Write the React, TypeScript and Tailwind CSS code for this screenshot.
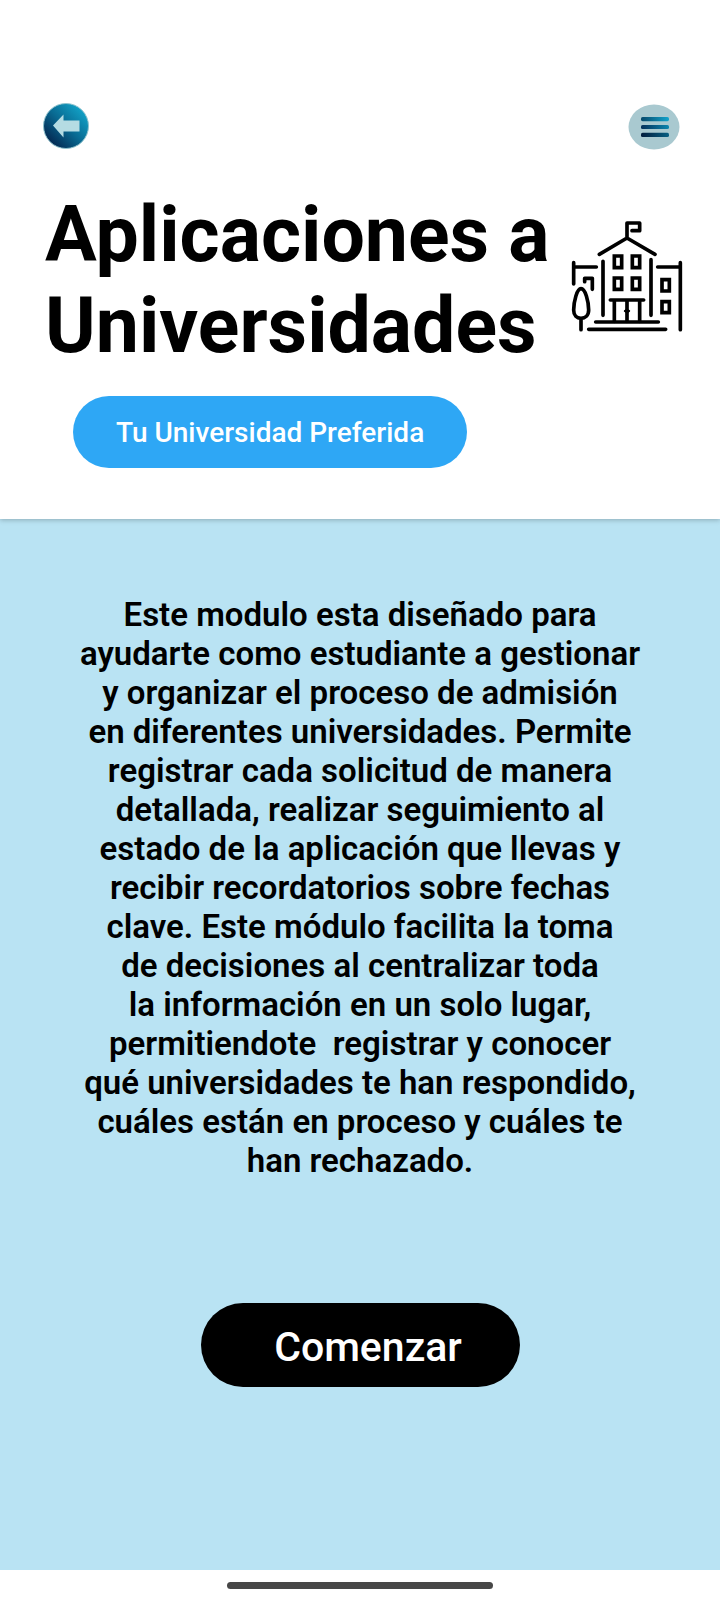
const description =
  "Este modulo esta diseñado para\nayudarte como estudiante a gestionar\ny organizar el proceso de admisión\nen diferentes universidades. Permite\nregistrar cada solicitud de manera\ndetallada, realizar seguimiento al\nestado de la aplicación que llevas y\nrecibir recordatorios sobre fechas\nclave. Este módulo facilita la toma\nde decisiones al centralizar toda\nla información en un solo lugar,\npermitiendote  registrar y conocer\nqué universidades te han respondido,\ncuáles están en proceso y cuáles te\nhan rechazado.";

function BackIcon() {
  return (
    <svg viewBox="0 0 48 48" className="size-12" aria-hidden="true">
      <defs>
        <linearGradient id="back-fill" x1="0.1" y1="0.85" x2="0.85" y2="0.1">
          <stop offset="0" stopColor="#04264f" />
          <stop offset="0.5" stopColor="#096a92" />
          <stop offset="1" stopColor="#12a3c8" />
        </linearGradient>
      </defs>
      <circle cx="24" cy="24" r="22.5" fill="url(#back-fill)" stroke="#8fc3ce" strokeWidth="1" />
      <path d="M11 23.5 21.5 12.5V18.5H37.5V29.5H21.5V35.5Z" fill="#b5dce3" />
    </svg>
  );
}

function MenuIcon() {
  return (
    <svg viewBox="0 0 52 46" className="h-[46px] w-[52px]" aria-hidden="true">
      <defs>
        <linearGradient id="bar-top" x1="0" x2="1">
          <stop offset="0" stopColor="#06486b" />
          <stop offset="1" stopColor="#12a4cc" />
        </linearGradient>
        <linearGradient id="bar-middle" x1="0" x2="1">
          <stop offset="0" stopColor="#04305a" />
          <stop offset="1" stopColor="#0c86ae" />
        </linearGradient>
        <linearGradient id="bar-bottom" x1="0" x2="1">
          <stop offset="0" stopColor="#021c3c" />
          <stop offset="1" stopColor="#086083" />
        </linearGradient>
      </defs>
      <ellipse cx="26" cy="23" rx="25.5" ry="22.5" fill="#a9c9d0" />
      <rect x="13" y="13" width="28" height="4.2" rx="1.6" fill="url(#bar-top)" />
      <rect x="13" y="20.9" width="28" height="4.2" rx="1.6" fill="url(#bar-middle)" />
      <rect x="13" y="28.8" width="28" height="4.2" rx="1.6" fill="url(#bar-bottom)" />
    </svg>
  );
}

function UniversityIcon() {
  return (
    <svg
      viewBox="0 0 405 405"
      className="size-[135px] shrink-0"
      fill="none"
      stroke="#000"
      strokeWidth="11"
      strokeLinecap="round"
      strokeLinejoin="round"
      role="img"
      aria-label="Universidad"
    >
      <path d="M118 133 201 84 285 133M201 84V39H239V62H216" />
      <path d="M129 154V316M273 149V316" />
      <path d="M41 158V222M41 171H109M293 171H361M361 158V359" />
      <path d="M74 215V205H97V238" />
      <path d="M63 236C51 236 41 275 41 300C41 317 51 325 63 325S86 317 86 300C86 275 76 236 63 236ZM63 327V359" />
      <path d="M163 138H185V173H163ZM217 138H239V173H217ZM163 204H185V238H163ZM217 204H239V238H217ZM306 209H328V243H306ZM306 275H328V308H306Z" strokeLinejoin="miter" />
      <path d="M151 270H251M163 270V334M239 270V334M201 272V334" />
      <path d="M194 303 201 298 208 303 201 308Z" fill="#000" strokeWidth="5" />
      <path d="M107 336H295M86 358H317" />
    </svg>
  );
}

export default function App() {
  return (
    <div className="flex min-h-screen flex-col bg-white font-['Roboto',sans-serif] text-black">
      <header className="relative z-10 bg-white pt-[102px] pb-[51px] shadow-[0_1px_5px_rgba(0,0,0,0.25)]">
        <nav className="flex items-end justify-between pr-10 pl-[42px]">
          <button type="button" aria-label="Volver" className="rounded-full">
            <BackIcon />
          </button>
          <button type="button" aria-label="Menú" className="rounded-full">
            <MenuIcon />
          </button>
        </nav>
        <div className="mt-10 flex items-start justify-between pr-[25px] pl-[45px]">
          <h1 className="text-[77px] leading-[91px] font-bold whitespace-nowrap">
            Aplicaciones a<br />
            Universidades
          </h1>
          <div className="pt-5">
            <UniversityIcon />
          </div>
        </div>
        <button
          type="button"
          className="mt-6 ml-[73px] flex h-[72px] items-center rounded-full bg-[#2ea7f5] px-[43px] pt-[2px] text-[28px] leading-8 font-medium text-white"
        >
          Tu Universidad Preferida
        </button>
      </header>
      <main className="flex grow flex-col items-center bg-[#b9e3f3] pt-[76px] pb-[183px]">
        <p className="text-center text-[33px] leading-[39px] font-semibold whitespace-pre">{description}</p>
        <button
          type="button"
          className="mt-auto h-[84px] w-[319px] rounded-full bg-black pt-1 pl-4 text-[41px] leading-[48px] font-medium text-white"
        >
          Comenzar
        </button>
      </main>
      <footer className="flex h-[30px] justify-center bg-white pt-3">
        <div className="h-[7px] w-[266px] rounded-full bg-[#474747]" />
      </footer>
    </div>
  );
}
